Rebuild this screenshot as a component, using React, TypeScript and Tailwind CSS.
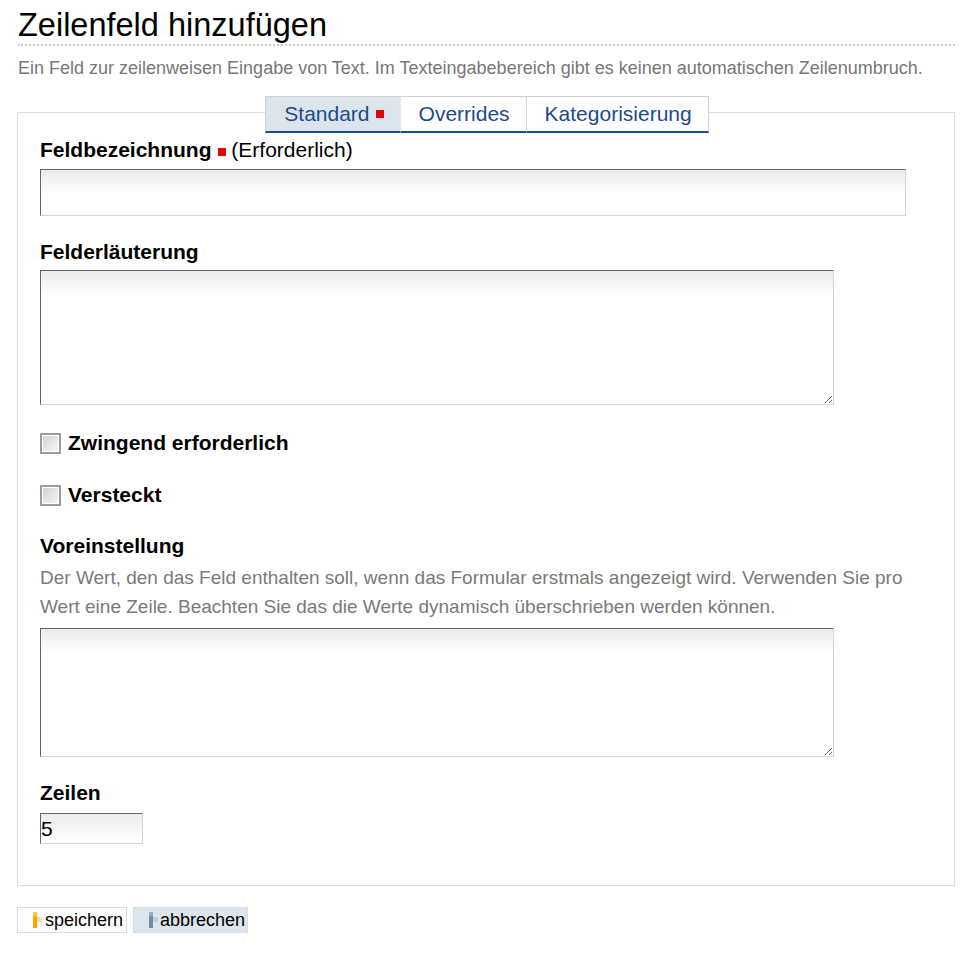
import React from "react";

const FONT = { fontFamily: '"Liberation Sans", Arial, sans-serif' };

const inputCls =
  "block border border-t-[#666] border-l-[#666] border-r-[#d4d4d4] border-b-[#d4d4d4] bg-[linear-gradient(to_bottom,#eaeaea,#ffffff_24px)] outline-none";

function RedMark() {
  return <span className="inline-block w-[8px] h-[8px] bg-[#e60000] ml-[6px] align-[1px]" />;
}

function Checkbox() {
  return (
    <span className="inline-block w-[21px] h-[21px] border-2 border-[#9c9c9c] bg-white p-px">
      <span className="block w-full h-full bg-[linear-gradient(135deg,#cfd4da,#f6f6f6)]" />
    </span>
  );
}

function ButtonIcon({ dark, mid, light }: { dark: string; mid: string; light: string }) {
  return (
    <svg width="10" height="16" viewBox="0 0 10 16" className="block">
      <rect x="0" y="0" width="4" height="4" fill={mid} />
      <rect x="0" y="4" width="4" height="12" fill={dark} />
      <rect x="4" y="5" width="5" height="5" fill={light} />
    </svg>
  );
}

const TABS = [
  { name: "Standard", active: true, mark: true },
  { name: "Overrides", active: false, mark: false },
  { name: "Kategorisierung", active: false, mark: false },
];

export default function App() {
  return (
    <div style={FONT} className="min-h-[962px] bg-white pl-[17px] pr-[22px] text-black">
      {/* Heading */}
      <h1 className="pt-[7px] pb-px text-[32.5px] leading-[36px] font-normal border-b-2 border-dotted border-[#cccccc] ml-px">
        Zeilenfeld hinzufügen
      </h1>
      <p className="mt-[12px] ml-px text-[18px] leading-[20px] text-[#777777]">
        Ein Feld zur zeilenweisen Eingabe von Text. Im Texteingabebereich gibt es keinen automatischen Zeilenumbruch.
      </p>

      {/* Form box */}
      <div className="mt-[34px] border border-[#dddddd] pl-[22px] pr-[20px] pb-[41px]">
        <div className="flex justify-center -mt-[17px]">
          <div className="flex">
            {TABS.map((tab, i) => (
              <div
                key={tab.name}
                className={
                  "h-[37px] flex items-center pl-[18px] pr-[16px] text-[21px] text-[#1d4a8e] border-t border-[#d0d0d0] border-b-2 border-b-[#1d4a8e] " +
                  (i === 0 ? "border-l " : "border-l border-l-[#d6d6d6] border-dotted ") +
                  (i === TABS.length - 1 ? "border-r border-r-[#d0d0d0] border-solid " : "") +
                  (tab.active ? "bg-[#dde5ec]" : "bg-white")
                }
                style={{ borderTopStyle: "solid", borderBottomStyle: "solid", borderRightStyle: "solid" }}
              >
                {tab.name}
                {tab.mark && <RedMark />}
              </div>
            ))}
          </div>
        </div>

        {/* Feldbezeichnung */}
        <label className="block mt-[5px] text-[21px] leading-[24px]">
          <span className="font-bold">Feldbezeichnung</span>
          <RedMark /> (Erforderlich)
        </label>
        <input type="text" className={inputCls + " mt-[7px] w-[866px] h-[47px]"} />

        {/* Felderläuterung */}
        <label className="block mt-[24px] text-[21px] leading-[24px] font-bold">Felderläuterung</label>
        <textarea className={inputCls + " mt-[6px] w-[794px] h-[135px]"} />

        {/* Checkboxes */}
        <div className="mt-[26px] flex items-center gap-[7px] h-[24px]">
          <Checkbox />
          <span className="text-[21px] leading-[24px] font-bold">Zwingend erforderlich</span>
        </div>
        <div className="mt-[28px] flex items-center gap-[7px] h-[24px]">
          <Checkbox />
          <span className="text-[21px] leading-[24px] font-bold">Versteckt</span>
        </div>

        {/* Voreinstellung */}
        <label className="block mt-[27px] text-[21px] leading-[24px] font-bold">Voreinstellung</label>
        <p className="mt-[5px] text-[19px] leading-[29px] text-[#7a7a7a]">
          Der Wert, den das Feld enthalten soll, wenn das Formular erstmals angezeigt wird. Verwenden Sie pro Wert eine
          Zeile. Beachten Sie das die Werte dynamisch überschrieben werden können.
        </p>
        <textarea className={inputCls + " mt-[7px] w-[794px] h-[129px]"} />

        {/* Zeilen */}
        <label className="block mt-[24px] text-[21px] leading-[24px] font-bold">Zeilen</label>
        <input
          type="text"
          defaultValue="5"
          className={inputCls + " mt-[8px] w-[103px] h-[31px] px-0 text-[21px] bg-[linear-gradient(to_bottom,#ececec,#ffffff_28px)]"}
        />
      </div>

      {/* Buttons */}
      <div className="mt-[21px] flex gap-[6px]">
        <button className="h-[26px] flex items-center border border-[#dddddd] bg-white pl-[15px] pr-[3px] text-[18px] leading-none">
          <ButtonIcon dark="#ffa200" mid="#ffc24a" light="#ffe39c" />
          <span className="ml-[2px]">speichern</span>
        </button>
        <button className="h-[26px] flex items-center border border-[#d5dde3] bg-[#dde5ec] pl-[15px] pr-[2px] text-[18px] leading-none">
          <ButtonIcon dark="#6f8fa0" mid="#93aebb" light="#bcd0d9" />
          <span className="ml-px">abbrechen</span>
        </button>
      </div>
    </div>
  );
}
